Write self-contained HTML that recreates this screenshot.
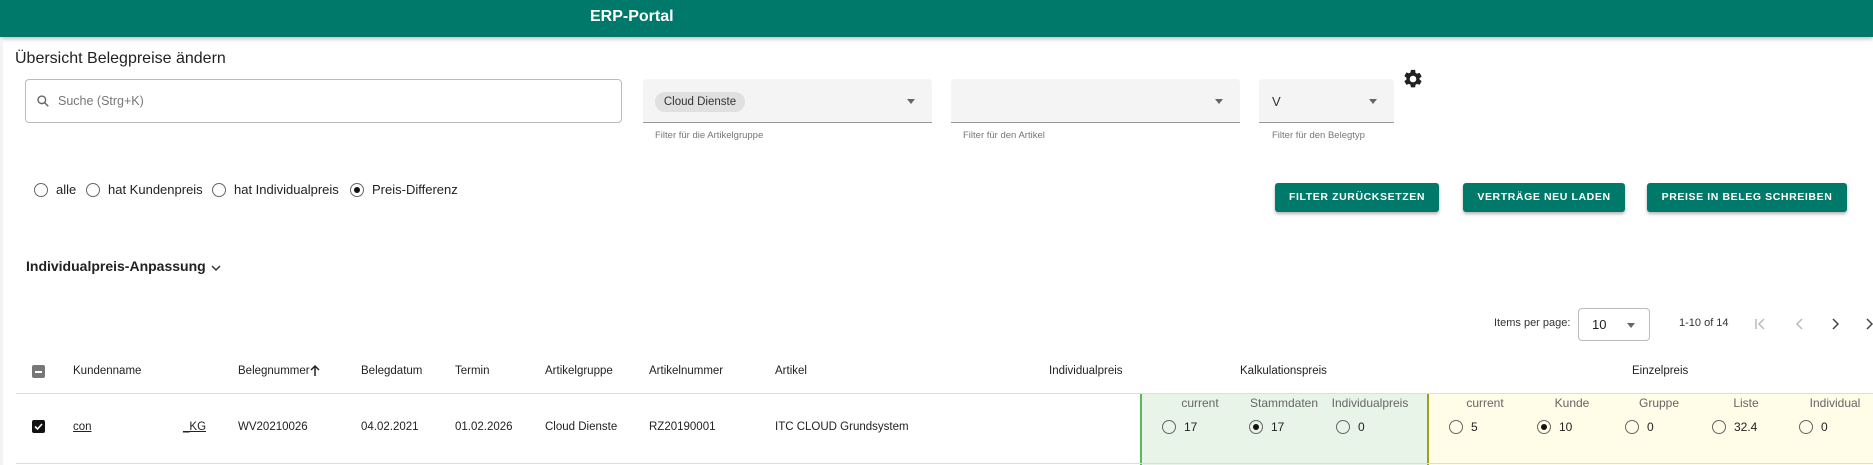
<!DOCTYPE html>
<html><head><meta charset="utf-8"><style>
*{margin:0;padding:0;box-sizing:border-box}
body{width:1873px;height:465px;overflow:hidden;background:#fff;font-family:"Liberation Sans",sans-serif;color:#222;position:relative}
.a{position:absolute;white-space:nowrap}
.hdr{left:0;top:0;width:1873px;height:37px;background:#00796b;box-shadow:0 2px 4px rgba(0,0,0,.25)}
.t12{font-size:11.5px;transform:translateY(-50%)}
.help{font-size:9.5px;color:#777}
.sel{background:#f4f4f4;border-bottom:1px solid #9a9a9a;border-radius:4px 4px 0 0;height:44px;top:79px}
.arr{width:0;height:0;border-left:4px solid transparent;border-right:4px solid transparent;border-top:5px solid #666}
.rad{width:14px;height:14px;border:1.5px solid #666;border-radius:50%;transform:translateY(-50%)}
.rad.on::after{content:"";position:absolute;left:2.5px;top:2.5px;width:6px;height:6px;border-radius:50%;background:#111}
.btn{background:#00796b;color:#fff;font-size:10.5px;font-weight:bold;letter-spacing:.6px;height:29px;top:183px;line-height:29px;text-align:center;border-radius:3px;box-shadow:0 2px 3px rgba(0,0,0,.3)}
.sub{font-size:12px;color:#666;transform:translate(-50%,-50%)}
.val{font-size:12px;transform:translateY(-50%)}
</style></head><body>
<div class="a hdr"></div>
<div class="a" style="left:590px;top:8px;color:#fff;font-size:16px;font-weight:bold">ERP-Portal</div>
<div class="a" style="left:0;top:40px;width:3px;height:425px;background:#f3f3f3"></div>
<div class="a" style="left:15px;top:50px;font-size:16px;color:#222">Übersicht Belegpreise ändern</div>

<div class="a" style="left:25px;top:79px;width:597px;height:44px;border:1px solid #bbb;border-radius:4px"></div>
<svg class="a" style="left:36px;top:94px" width="14" height="14" viewBox="0 0 24 24"><circle cx="10" cy="10" r="6.5" fill="none" stroke="#666" stroke-width="2.4"/><path d="M15 15l6 6" stroke="#666" stroke-width="2.6"/></svg>
<div class="a" style="left:58px;top:94px;font-size:12.5px;color:#777">Suche (Strg+K)</div>

<div class="a sel" style="left:643px;width:289px"></div>
<div class="a" style="left:655px;top:92px;width:90px;height:20px;border-radius:10px;background:#e0e0e0;font-size:11.5px;line-height:20px;text-align:center;color:#333">Cloud Dienste</div>
<div class="a arr" style="left:907px;top:99px"></div>
<div class="a help" style="left:655px;top:130px">Filter für die Artikelgruppe</div>

<div class="a sel" style="left:951px;width:289px"></div>
<div class="a arr" style="left:1215px;top:99px"></div>
<div class="a help" style="left:963px;top:130px">Filter für den Artikel</div>

<div class="a sel" style="left:1259px;width:135px"></div>
<div class="a" style="left:1272px;top:94px;font-size:13px;color:#333">V</div>
<div class="a arr" style="left:1369px;top:99px"></div>
<div class="a help" style="left:1272px;top:130px">Filter für den Belegtyp</div>

<svg class="a" style="left:1402px;top:68px" width="22" height="22" viewBox="0 0 24 24"><path fill="#222" d="M19.14 12.94c.04-.3.06-.61.06-.94s-.02-.64-.07-.94l2.030-1.580a.5.5 0 0 0 .12-.61l-1.92-3.32a.5.5 0 0 0-.59-.22l-2.39.96a7 7 0 0 0-1.62-.94l-.36-2.54A.48.48 0 0 0 13.92 2h-3.84a.47.47 0 0 0-.47.41l-.36 2.54c-.59.24-1.13.57-1.62.94l-2.39-.96a.48.48 0 0 0-.59.22L2.74 8.47a.47.47 0 0 0 .12.61l2.03 1.58c-.05.3-.09.63-.09.94s.02.64.07.94l-2.03 1.58a.5.5 0 0 0-.12.61l1.92 3.32c.12.22.37.29.59.22l2.39-.96c.5.38 1.03.7 1.62.94l.36 2.54c.05.24.24.41.48.41h3.84c.24 0 .44-.17.47-.41l.36-2.54c.59-.24 1.13-.56 1.62-.94l2.39.96c.22.08.47 0 .59-.22l1.920-3.320a.47.47 0 0 0-.12-.61l-2.01-1.58zM12 15.6A3.6 3.6 0 1 1 12 8.4a3.6 3.6 0 0 1 0 7.2z"/></svg>

<div class="a rad" style="left:34px;top:190px"></div><div class="a" style="left:56px;top:182px;font-size:13px">alle</div>
<div class="a rad" style="left:86px;top:190px"></div><div class="a" style="left:108px;top:182px;font-size:13px">hat Kundenpreis</div>
<div class="a rad" style="left:212px;top:190px"></div><div class="a" style="left:234px;top:182px;font-size:13px">hat Individualpreis</div>
<div class="a rad on" style="left:350px;top:190px"></div><div class="a" style="left:372px;top:182px;font-size:13px">Preis-Differenz</div>

<div class="a btn" style="left:1275px;width:164px">FILTER ZURÜCKSETZEN</div>
<div class="a btn" style="left:1463px;width:162px">VERTRÄGE NEU LADEN</div>
<div class="a btn" style="left:1647px;width:200px">PREISE IN BELEG SCHREIBEN</div>

<div class="a" style="left:26px;top:258px;font-size:14px;font-weight:bold">Individualpreis-Anpassung</div>
<svg class="a" style="left:211px;top:264px" width="10" height="8" viewBox="0 0 10 8"><path d="M1 2l4 4 4-4" fill="none" stroke="#333" stroke-width="1.5"/></svg>

<div class="a" style="left:1494px;top:317px;font-size:11px;color:#333">Items per page:</div>
<div class="a" style="left:1578px;top:308px;width:72px;height:33px;border:1px solid #bbb;border-radius:4px"></div>
<div class="a" style="left:1592px;top:317px;font-size:13px">10</div>
<div class="a arr" style="left:1627px;top:323px"></div>
<div class="a" style="left:1679px;top:317px;font-size:11px;color:#333">1-10 of 14</div>
<svg class="a" style="left:1752px;top:316px" width="121" height="16" viewBox="0 0 121 16"><g fill="none" stroke="#bbb" stroke-width="1.5"><path d="M4 3v10M12 3l-5 5 5 5"/><path d="M50 3l-5 5 5 5"/></g><g fill="none" stroke="#444" stroke-width="1.5"><path d="M81 3l5 5-5 5"/><path d="M115 3l5 5-5 5"/></g></svg>

<div class="a" style="left:32px;top:365px;width:13px;height:13px;background:#777;border-radius:2px"><div style="position:absolute;left:3px;top:5.5px;width:7px;height:2px;background:#fff"></div></div>
<div class="a t12" style="left:73px;top:371px">Kundenname</div>
<div class="a t12" style="left:238px;top:371px">Belegnummer</div>
<svg class="a" style="left:310px;top:364px" width="10" height="13" viewBox="0 0 10 13"><path d="M5 12V2M1 6l4-4 4 4" fill="none" stroke="#222" stroke-width="1.5"/></svg>
<div class="a t12" style="left:361px;top:371px">Belegdatum</div>
<div class="a t12" style="left:455px;top:371px">Termin</div>
<div class="a t12" style="left:545px;top:371px">Artikelgruppe</div>
<div class="a t12" style="left:649px;top:371px">Artikelnummer</div>
<div class="a t12" style="left:775px;top:371px">Artikel</div>
<div class="a t12" style="left:1049px;top:371px">Individualpreis</div>
<div class="a t12" style="left:1240px;top:371px">Kalkulationspreis</div>
<div class="a t12" style="left:1632px;top:371px">Einzelpreis</div>

<div class="a" style="left:16px;top:393px;width:1857px;height:1px;background:#ddd"></div>
<div class="a" style="left:1140px;top:394px;width:287px;height:71px;background:#e8f4e8;border-left:2px solid #5cb85c"></div>
<div class="a" style="left:1427px;top:394px;width:446px;height:71px;background:#fffce8;border-left:2px solid #9e9d24"></div>
<div class="a" style="left:16px;top:463px;width:1857px;height:1px;background:#ddd"></div>

<div class="a" style="left:32px;top:420px;width:13px;height:13px;background:#111;border-radius:2px"><svg style="position:absolute;left:1px;top:1px" width="11" height="11" viewBox="0 0 11 11"><path d="M2 5.5l2.5 2.5L9 3" fill="none" stroke="#fff" stroke-width="1.6"/></svg></div>
<div class="a t12" style="left:73px;top:427px;text-decoration:underline">con</div>
<div class="a t12" style="left:183px;top:427px;text-decoration:underline">_KG</div>
<div class="a t12" style="left:238px;top:427px">WV20210026</div>
<div class="a t12" style="left:361px;top:427px">04.02.2021</div>
<div class="a t12" style="left:455px;top:427px">01.02.2026</div>
<div class="a t12" style="left:545px;top:427px">Cloud Dienste</div>
<div class="a t12" style="left:649px;top:427px">RZ20190001</div>
<div class="a t12" style="left:775px;top:427px">ITC CLOUD Grundsystem</div>

<div class="a sub" style="left:1200px;top:403px">current</div>
<div class="a sub" style="left:1284px;top:403px">Stammdaten</div>
<div class="a sub" style="left:1370px;top:403px">Individualpreis</div>
<div class="a sub" style="left:1485px;top:403px">current</div>
<div class="a sub" style="left:1572px;top:403px">Kunde</div>
<div class="a sub" style="left:1659px;top:403px">Gruppe</div>
<div class="a sub" style="left:1746px;top:403px">Liste</div>
<div class="a sub" style="left:1835px;top:403px">Individual</div>

<div class="a rad" style="left:1162px;top:427px"></div><div class="a val" style="left:1184px;top:427px">17</div>
<div class="a rad on" style="left:1249px;top:427px"></div><div class="a val" style="left:1271px;top:427px">17</div>
<div class="a rad" style="left:1336px;top:427px"></div><div class="a val" style="left:1358px;top:427px">0</div>
<div class="a rad" style="left:1449px;top:427px"></div><div class="a val" style="left:1471px;top:427px">5</div>
<div class="a rad on" style="left:1537px;top:427px"></div><div class="a val" style="left:1559px;top:427px">10</div>
<div class="a rad" style="left:1625px;top:427px"></div><div class="a val" style="left:1647px;top:427px">0</div>
<div class="a rad" style="left:1712px;top:427px"></div><div class="a val" style="left:1734px;top:427px">32.4</div>
<div class="a rad" style="left:1799px;top:427px"></div><div class="a val" style="left:1821px;top:427px">0</div>
</body></html>
